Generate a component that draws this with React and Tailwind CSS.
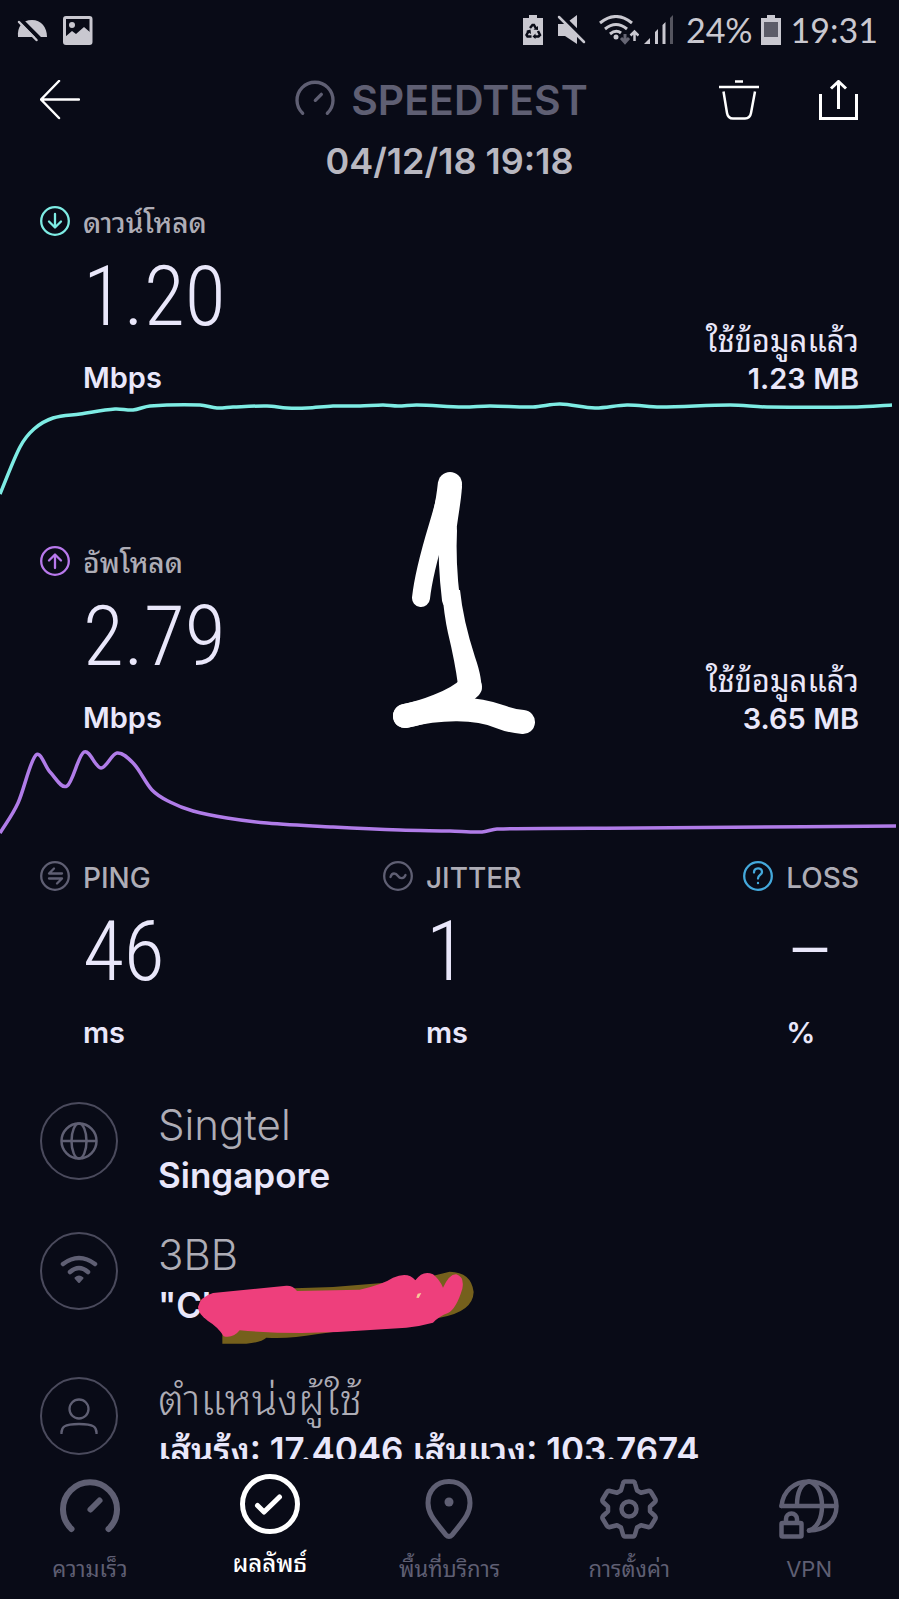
import React from 'react';

const downloadPoints = [
    [0, 92], [20, 45], [34, 27], [53, 16], [80, 12], [115, 7], [133, 8], [150, 4], [200, 3], [217, 6],
    [233, 5], [267, 4], [287, 6], [307, 6], [333, 4], [360, 4], [383, 3], [398, 4], [417, 3],
    [463, 5], [490, 4], [533, 5], [560, 2], [595, 6], [627, 3], [660, 5], [730, 3], [767, 5],
    [857, 5], [892, 3],
];

const uploadPoints = [
    [0, 91], [18, 61], [36, 13], [50, 30], [67, 44], [84, 10], [101, 26], [117, 11], [134, 22],
    [152, 48], [170, 60], [193, 69], [227, 76], [267, 81], [333, 85], [400, 88], [450, 89],
    [482, 90], [497, 87], [640, 86], [896, 84],
];

// Turns the samples into one smooth curve
const toPath = (points) => {
    let d = `M${points[0][0]} ${points[0][1]}`;
    for (let i = 0; i < points.length - 1; i++) {
        const prev = points[i - 1] || points[i];
        const [x1, y1] = points[i];
        const [x2, y2] = points[i + 1];
        const next = points[i + 2] || points[i + 1];
        const dx = (x2 - x1) / 3;
        const slope = (a, b) => (b[1] - a[1]) / (b[0] - a[0] || 1);
        const s1 = i === 0 ? slope(points[0], points[1]) : slope(prev, points[i + 1]);
        const s2 = i === points.length - 2 ? slope(points[i], points[i + 1]) : slope(points[i], next);
        d += ` C${x1 + dx} ${y1 + s1 * dx} ${x2 - dx} ${y2 - s2 * dx} ${x2} ${y2}`;
    }
    return d;
};

const Chart = ({ points, color }) => (
    <svg className="block h-[113px] w-full" viewBox="0 0 899 113" preserveAspectRatio="none" fill="none" aria-hidden="true">
        <path d={toPath(points)} stroke={color} strokeWidth="3.500" />
    </svg>
);

const GaugeIcon = ({ className, width = 6 }) => (
    <svg className={className} viewBox="0 0 60 60" fill="none" stroke="currentColor" strokeWidth={width} aria-hidden="true">
        <path d="M11.5 50A27 27 0 1 1 48.5 50" strokeLinecap="round" />
        <path d="M30.500 30.500L39.500 21.500" strokeLinecap="round" />
    </svg>
);

const Ring = ({ color, children }) => (
    <svg className="size-[30px] shrink-0" viewBox="0 0 30 30" fill="none" stroke={color} strokeWidth="2.300" strokeLinecap="round" strokeLinejoin="round" aria-hidden="true">
        <circle cx="15" cy="15" r="13.800" />
        {children}
    </svg>
);

const StatusBar = () => (
    <div className="flex h-[60px] items-center justify-between pr-[21px] pl-[17px] text-[#c9c8d0]">
        <div className="flex items-center gap-4">
            <svg className="h-[30px] w-[30px]" viewBox="0 0 30 30" aria-hidden="true">
                <path d="M1 22C0 12 5 5 15 5C24 5 30 12 30 22Z" fill="currentColor" />
                <path d="M4 5L23 24" stroke="#090b17" strokeWidth="4" />
                <path d="M2 7L19.500 25" stroke="currentColor" strokeWidth="2.500" strokeLinecap="round" />
            </svg>
            <svg className="h-[30px] w-[30px]" viewBox="0 0 30 30" aria-hidden="true">
                <rect x="1.500" y="2.500" width="26.500" height="26" rx="1.500" fill="none" stroke="currentColor" strokeWidth="3" />
                <circle cx="9" cy="10" r="3" fill="currentColor" />
                <path d="M2 22L9 16L13 19L21 12L28 18V28H2Z" fill="currentColor" />
            </svg>
        </div>
        <div className="flex items-center">
            <svg className="h-[30px] w-5" viewBox="0 0 20 30" aria-hidden="true">
                <path d="M6 0H14V3H20V30H0V3H6Z" fill="currentColor" />
                <g fill="none" stroke="#090b17" strokeWidth="2.500">
                    <path d="M7 13L9.500 10H11L13 13.500" />
                    <path d="M15 16L17 20L15.500 21.500H11" />
                    <path d="M8.500 21.500H4.500L3.500 20L6 15.500" />
                </g>
                <path d="M10.500 14.500L15 15V11ZM12.500 18.500V24L9.500 21.500ZM3 16L7.500 14.500L8 19Z" fill="#090b17" />
            </svg>
            <svg className="ml-[14px] h-[30px] w-[29px]" viewBox="0 0 29 30" aria-hidden="true">
                <path d="M1 9H8L20 0V29L8 21H1Z" fill="currentColor" />
                <path d="M4 0L29 25" stroke="#090b17" strokeWidth="4" />
                <path d="M2 2L27 27" stroke="currentColor" strokeWidth="2.500" strokeLinecap="round" />
            </svg>
            <svg className="ml-[13px] h-[30px] w-10" viewBox="0 0 40 30" fill="none" stroke="currentColor" strokeWidth="3" aria-hidden="true">
                <path d="M1 8Q17 -5 33 8" />
                <path d="M6 14Q17 5 28 14" />
                <path d="M11 19Q17 14 22 18" />
                <circle cx="17" cy="22" r="2.500" fill="currentColor" stroke="none" />
                <path d="M26 19V27M22 23L26 27.500L30 23" stroke="#666674" />
                <path d="M35.500 26V17M31.500 20.500L35.500 16.500L39.500 20.500" strokeWidth="2.500" />
            </svg>
            <svg className="ml-[5px] h-[30px] w-[30px]" viewBox="0 0 30 30" fill="currentColor" aria-hidden="true">
                <path d="M0 29L6 23V29Z" />
                <path d="M11 17L14 14V29H11ZM18.500 10L21.500 7V29H18.500Z" />
                <path d="M26 3L29 0V29H26Z" fill="#55555f" />
            </svg>
            <span className="ml-3 font-['Lato',sans-serif] text-[34px] leading-10">24%</span>
            <svg className="ml-2 h-[30px] w-5" viewBox="0 0 20 30" aria-hidden="true">
                <path d="M6 0H14V3H20V30H0V3H6Z" fill="currentColor" />
                <rect x="3" y="7" width="14" height="15" fill="#5c5c68" />
            </svg>
            <span className="ml-[10px] font-['Lato',sans-serif] text-[34px] leading-10">19:31</span>
        </div>
    </div>
);

const Header = () => (
    <header>
        <div className="grid h-20 grid-cols-[1fr_auto_1fr] items-center px-10">
            <button type="button" aria-label="Back" className="size-10">
                <svg className="size-10" viewBox="0 0 40 40" fill="none" stroke="white" strokeWidth="2.500" strokeLinecap="round" strokeLinejoin="round">
                    <path d="M39 19.500H1M19 1L1 19.500L19 38" />
                </svg>
            </button>
            <h1 className="mr-4 flex items-center gap-4 text-[41px] leading-10 font-semibold text-[#5f5f73]">
                <GaugeIcon className="size-10" width={5} />
                SPEEDTEST
            </h1>
            <div className="flex justify-end gap-[60px]">
                <button type="button" aria-label="Delete" className="size-10">
                    <svg className="size-10" viewBox="0 0 40 40" fill="none" stroke="white" strokeWidth="2.500">
                        <path d="M16 1.500H24M0 7H40M4.500 11.500L8 33Q9 38.500 14 38.500H26Q31 38.500 32 33L36 11.500" />
                    </svg>
                </button>
                <button type="button" aria-label="Share" className="size-10">
                    <svg className="size-10" viewBox="0 0 40 40" fill="none" stroke="white" strokeWidth="3">
                        <path d="M1.500 14V38.500H37.500V14M19.500 29V2M12 8.500L19.500 1.500L27 8.500" />
                    </svg>
                </button>
            </div>
        </div>
        <p className="text-center text-[36px] leading-[42px] font-semibold text-[#b9b8c1]">04/12/18 19:18</p>
    </header>
);

const Metric = ({ icon, label, value, unit }) => (
    <div className="flex gap-[13px]">
        <div className="flex h-[42px] items-center">{icon}</div>
        <div>
            <h2 className="pt-0.5 text-[28px] leading-[42px] font-medium text-[#aeadb6]">{label}</h2>
            <p className="font-['Roboto_Condensed',Roboto,sans-serif] text-[84px] leading-[106px] font-light">{value}</p>
            <p className="pt-1 text-[29px] leading-[48px] font-semibold">{unit}</p>
        </div>
    </div>
);

const Transfer = ({ used, points, color, ...metric }) => (
    <section>
        <div className="flex items-end justify-between px-10">
            <Metric {...metric} unit="Mbps" />
            <div className="pb-1 text-right leading-[38px]">
                <p className="text-[31px] font-normal">ใช้ข้อมูลแล้ว</p>
                <p className="text-[29px] font-semibold">{used}</p>
            </div>
        </div>
        <Chart points={points} color={color} />
    </section>
);

const InfoRow = ({ icon, title, detail, children }) => (
    <div className="flex items-start gap-10">
        <div className="mt-0.5 flex size-[78px] shrink-0 items-center justify-center rounded-full border-2 border-[#4a4a5c] text-[#5f5f73]">
            {icon}
        </div>
        <div className="relative">
            <h3 className="text-[42px] leading-[50px] font-light whitespace-nowrap text-[#aeadb6]">{title}</h3>
            <p className="text-[35px] leading-[50px] font-semibold whitespace-nowrap">{detail}</p>
            {children}
        </div>
    </div>
);

const Scribble = () => (
    <svg className="absolute top-[37px] left-[35px] h-20 w-[287px]" viewBox="580 560 861 240" aria-hidden="true">
        <path d="M668 760V790H740Q785 786 800 772Q870 776 950 762L1320 712Q1420 695 1422 635Q1415 575 1350 574L1310 584L1250 600L1000 620L885 624Z" fill="#75601c" />
        <path
            d="M595 680Q600 650 640 638L860 616Q880 615 892 632L1080 628Q1150 612 1180 592Q1225 572 1247 600Q1270 568 1300 582Q1320 598 1330 622Q1350 580 1370 582Q1395 590 1388 625Q1370 685 1345 698Q1318 708 1300 727Q1260 738 1220 742L1100 750Q900 766 720 750Q700 775 672 768Q655 740 625 722Q595 700 595 680Z"
            fill="#ee3f7c"
        />
        <path d="M1250 652L1254 640L1265 638L1257 653Z" fill="#f6c99a" />
    </svg>
);

// Hand-drawn numeral marked over the results
const Marker = () => (
    <svg
        className="absolute top-[288px] left-[43%] h-[268px] w-[150px]"
        viewBox="386 470 150 268"
        fill="none"
        stroke="white"
        strokeLinecap="round"
        aria-hidden="true"
    >
        <path d="M449 484L449 485" strokeWidth="24" />
        <path d="M437 482C434 510 428 530 422 548L438 555L454 545C455 525 460 505 461 486Z" fill="white" stroke="none" />
        <path d="M444 500C440 520 424 560 420 598" strokeWidth="18" />
        <path d="M447 530C446 550 447 575 450 600" strokeWidth="18" />
        <path d="M441 590Q443 615 447 633Q454 662 457 685L480 692Q482 680 474 657Q462 620 459 590Z" fill="white" stroke="none" />
        <path d="M469 687C455 702 420 713 404 716" strokeWidth="24" />
        <path d="M404 716C440 707 475 707 500 717Q510 721 522 722" strokeWidth="24" />
    </svg>
);

const tabs = [
    { label: 'ความเร็ว', icon: <GaugeIcon className="size-[60px]" /> },
    {
        label: 'ผลลัพธ์',
        active: true,
        icon: (
            <svg className="size-[60px]" viewBox="0 0 60 60" fill="none" stroke="currentColor" strokeWidth="5" strokeLinecap="round" strokeLinejoin="round">
                <circle cx="30" cy="30" r="27.500" />
                <path d="M17.500 31.500L24 38L39.500 23" />
            </svg>
        ),
    },
    {
        label: 'พื้นที่บริการ',
        icon: (
            <svg className="size-[60px]" viewBox="0 0 60 60" fill="none" stroke="currentColor" strokeWidth="5">
                <path d="M30 2.500C17 2.500 9 12 9 24C9 36 17 43 27 56Q30 59 33 56C43 43 51 36 51 24C51 12 43 2.500 30 2.500Z" />
                <circle cx="30" cy="23" r="4.500" fill="currentColor" stroke="none" />
            </svg>
        ),
    },
    {
        label: 'การตั้งค่า',
        icon: (
            <svg className="size-[60px]" viewBox="-30 -30 60 60" fill="none" stroke="currentColor" strokeWidth="4.500" strokeLinejoin="round">
                <path d="M-8 -18.500L-6 -25.500Q-5.500 -27.500 -4 -27.500H4Q5.500 -27.500 6 -25.500L8 -18.500L12 -16.200L19 -18Q21 -18.500 22 -17L26.500 -9.500Q27 -8 26 -7L21 -2.300V2.300L26 7Q27 8 26.500 9.500L22 17Q21 18.500 19 18L12 16.200L8 18.500L6 25.500Q5.500 27.500 4 27.500H-4Q-5.500 27.500 -6 25.500L-8 18.500L-12 16.200L-19 18Q-21 18.500 -22 17L-26.500 9.500Q-27 8 -26 7L-21 2.300V-2.300L-26 -7Q-27 -8 -26.500 -9.500L-22 -17Q-21 -18.500 -19 -18L-12 -16.200Z" />
                <circle r="7.500" />
            </svg>
        ),
    },
    {
        label: 'VPN',
        icon: (
            <svg className="size-[60px]" viewBox="0 0 60 60" fill="none" stroke="currentColor" strokeWidth="4.500" strokeLinecap="round" strokeLinejoin="round">
                <path d="M2.500 27C4 12 15 2.500 30 2.500S57.500 12 57.500 27C57.500 42 46 51.500 30 51.500" />
                <path d="M2.500 27H57" />
                <path d="M30 2.500C22 4 18 14 18 26M30 2.500C38 4 43 14 43 27C43 40 38 49 30 51.500" />
                <rect x="2.500" y="44" width="20" height="13.500" rx="1" />
                <path d="M7 43V40A5.500 5.500 0 0 1 18 40V43" />
            </svg>
        ),
    },
];

const App = () => (
    <div className="flex h-screen flex-col overflow-hidden bg-[#090b17] font-['Inter','Noto_Sans_Thai_Looped','Noto_Looped_Thai','Loma','Waree','Garuda','Noto_Sans_Thai',sans-serif] text-[#e9e7fa]">
        <StatusBar />
        <Header />
        <main className="relative min-h-0 flex-1 overflow-hidden pt-[18px]">
            <div className="flex flex-col gap-[25px]">
                <Transfer
                    icon={<Ring color="#7eece4"><path d="M15 8V21M9 15.500L15 21.500L21 15.500" /></Ring>}
                    label="ดาวน์โหลด"
                    value="1.20"
                    used="1.23 MB"
                    points={downloadPoints}
                    color="#7eece4"
                />
                <Transfer
                    icon={<Ring color="#b879ec"><path d="M15 22V9M9 14.500L15 8.500L21 14.500" /></Ring>}
                    label="อัพโหลด"
                    value="2.79"
                    used="3.65 MB"
                    points={uploadPoints}
                    color="#b07ce8"
                />
            </div>
            <Marker />
            <section className="grid grid-cols-[343px_1fr_auto] px-10">
                <Metric
                    icon={<Ring color="#5f5f73"><path d="M22 12.500H9L14 7.500M9 17.500H22L17 22.500" /></Ring>}
                    label="PING"
                    value="46"
                    unit="ms"
                />
                <Metric
                    icon={<Ring color="#5f5f73"><path d="M7.500 16C9 11 13 12 15 15S21 18 22.500 14" /></Ring>}
                    label="JITTER"
                    value="1"
                    unit="ms"
                />
                <Metric
                    icon={<Ring color="#44a9dc"><path d="M11 11.500C11 6 19 6 19 11C19 14 15 14 15 17.500M15 22V22.200" /></Ring>}
                    label="LOSS"
                    value="–"
                    unit="%"
                />
            </section>
            <section className="px-10 pt-[43px]">
                <div className="mb-[30px]">
                    <InfoRow
                        icon={
                            <svg className="size-[38px]" viewBox="0 0 38 38" fill="none" stroke="currentColor" strokeWidth="2.500">
                                <circle cx="19" cy="19" r="17.500" />
                                <ellipse cx="19" cy="19" rx="7.500" ry="17.500" />
                                <path d="M1 19H37" />
                            </svg>
                        }
                        title="Singtel"
                        detail="Singapore"
                    />
                </div>
                <div className="mb-[45px]">
                    <InfoRow
                        icon={
                            <svg className="size-[38px]" viewBox="0 0 38 38" fill="none" stroke="currentColor" strokeWidth="4.500" strokeLinecap="round">
                                <path d="M3 12Q19 0 35 12" />
                                <path d="M10 20Q19 12 28 20" />
                                <path d="M15.500 26Q19 23 22.500 26L19 30Z" fill="currentColor" strokeWidth="2" strokeLinejoin="round" />
                            </svg>
                        }
                        title="3BB"
                        detail={'"Ch'}
                    >
                        <Scribble />
                    </InfoRow>
                </div>
                <InfoRow
                    icon={
                        <svg className="size-[38px]" viewBox="0 0 38 38" fill="none" stroke="currentColor" strokeWidth="2.300">
                            <circle cx="19" cy="12" r="9.500" />
                            <path d="M1.500 37C1 30 4 27 19 27S37 30 36.500 37" />
                        </svg>
                    }
                    title="ตำแหน่งผู้ใช้"
                    detail="เส้นรุ้ง: 17.4046 เส้นแวง: 103.7674"
                />
            </section>
        </main>
        <nav className="grid h-[140px] shrink-0 grid-cols-5">
            {tabs.map((tab) => (
                <a
                    key={tab.label}
                    href="#"
                    className={
                        tab.active
                            ? 'flex flex-col items-center gap-[14px] pt-[15px] text-[24px] leading-8 font-medium text-white'
                            : 'flex flex-col items-center gap-[14px] pt-5 text-[22px] leading-8 text-[#5f5f73]'
                    }
                >
                    {tab.icon}
                    {tab.label}
                </a>
            ))}
        </nav>
    </div>
);

export default App;
